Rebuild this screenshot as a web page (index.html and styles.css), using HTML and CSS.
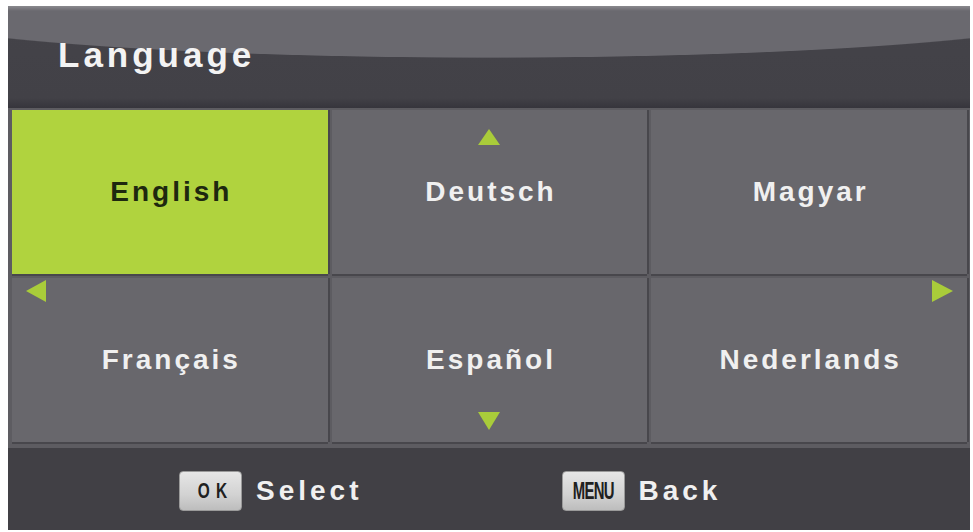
FILE: index.html
```html
<!DOCTYPE html>
<html lang="en">
<head>
<meta charset="utf-8">
<title>Language</title>
<link rel="stylesheet" href="styles.css">
</head>
<body>
<div class="screen">
  <div class="header">
    <h1 class="title">Language</h1>
  </div>
  <div class="grid">
    <div class="cell selected"><span class="label">English</span></div>
    <div class="cell">
      <svg class="arrow arrow-up" width="22" height="16" viewBox="0 0 22 16"><polygon points="11,0 22,16 0,16"/></svg>
      <span class="label">Deutsch</span>
    </div>
    <div class="cell"><span class="label">Magyar</span></div>
    <div class="cell">
      <svg class="arrow arrow-left" width="20" height="22" viewBox="0 0 20 22"><polygon points="0,11 20,0 20,22"/></svg>
      <span class="label">Français</span>
    </div>
    <div class="cell">
      <span class="label">Español</span>
      <svg class="arrow arrow-down" width="22" height="18" viewBox="0 0 22 18"><polygon points="0,0 22,0 11,18"/></svg>
    </div>
    <div class="cell">
      <svg class="arrow arrow-right" width="21" height="22" viewBox="0 0 21 22"><polygon points="0,0 21,11 0,22"/></svg>
      <span class="label">Nederlands</span>
    </div>
  </div>
  <div class="footer">
    <div class="hint">
      <span class="key key-ok"><span class="key-text">OK</span></span>
      <span class="hint-label">Select</span>
    </div>
    <div class="hint">
      <span class="key key-menu"><span class="key-text">MENU</span></span>
      <span class="hint-label">Back</span>
    </div>
  </div>
</div>
</body>
</html>
```
FILE: styles.css
```css
html, body {
  margin: 0;
  padding: 0;
  background: #ffffff;
}

body {
  width: 973px;
  height: 532px;
  overflow: hidden;
  font-family: "Liberation Sans", Arial, sans-serif;
}

.screen {
  margin: 6px 3px 0 8px;
  width: 962px;
  height: 524px;
  background: #5d5c61;
  display: flex;
  flex-direction: column;
}

.header {
  height: 102px;
  box-sizing: border-box;
  padding: 29px 0 0 50px;
  background:
    linear-gradient(to bottom, rgba(255, 255, 255, 0.22) 0, rgba(255, 255, 255, 0) 5px),
    radial-gradient(621px 52px at 50% 0, #6a696f 98.5%, rgba(106, 105, 111, 0) 100%),
    linear-gradient(to bottom, #444349 0, #424147 90%, #36353c 100%);
}

.title {
  margin: 0;
  font-size: 35px;
  line-height: 40px;
  font-weight: bold;
  letter-spacing: 4px;
  color: #f3f3f3;
}

.grid {
  margin-top: 2px;
  display: grid;
  grid-template-columns: repeat(3, 1fr);
  grid-template-rows: 164px 164px;
  gap: 4px;
  padding: 0 3px 0 4px;
  background: #5d5c61;
}

.cell {
  position: relative;
  background: #68676c;
  display: flex;
  align-items: center;
  justify-content: center;
  box-shadow: 0 2px 0 #48474c, 2px 0 0 #48474c;
}

.cell.selected {
  background: #b0d33e;
}

.label {
  font-size: 28px;
  font-weight: bold;
  letter-spacing: 3px;
  margin-right: -3px;
  color: #f0f0f0;
}

.selected .label {
  color: #1e280f;
}

.arrow {
  position: absolute;
  fill: #a9cc3a;
}

.arrow-up {
  top: 19px;
  left: calc(50% - 11px);
}

.arrow-down {
  bottom: 12px;
  left: calc(50% - 11px);
}

.arrow-left {
  top: 2px;
  left: 14px;
}

.arrow-right {
  top: 2px;
  right: 14px;
}

.footer {
  margin-top: 6px;
  flex: 1;
  box-sizing: border-box;
  padding: 4px 0 0 171px;
  background: #414045;
  display: flex;
  align-items: center;
  gap: 199px;
}

.hint {
  display: flex;
  align-items: center;
  gap: 14px;
}

.key {
  width: 63px;
  height: 40px;
  box-sizing: border-box;
  border-radius: 4px;
  background: linear-gradient(to bottom, #e6e6e6 0, #d2d2d2 60%, #bdbdbd 100%);
  border: 1px solid #9a9a9a;
  display: flex;
  align-items: center;
  justify-content: center;
  color: #202020;
  overflow: hidden;
}

.key-text {
  display: inline-block;
  font-weight: bold;
  white-space: nowrap;
}

.key-ok .key-text {
  font-size: 22px;
  letter-spacing: 9px;
  margin-right: -9px;
  transform: scaleX(0.7);
}

.key-menu .key-text {
  font-size: 24px;
  letter-spacing: -1px;
  transform: scaleX(0.62);
}

.hint-label {
  font-size: 28px;
  font-weight: bold;
  letter-spacing: 4px;
  color: #f0f0f0;
}
```
